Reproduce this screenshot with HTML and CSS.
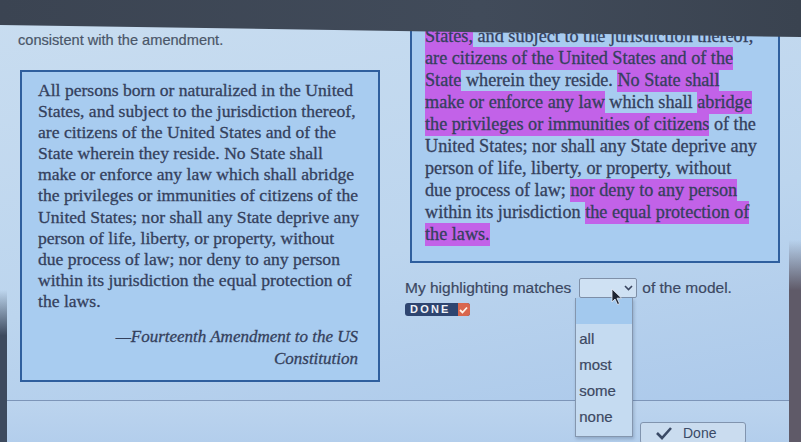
FILE: index.html
```html
<!DOCTYPE html>
<html lang="en">
<head>
<meta charset="utf-8">
<title>Fourteenth Amendment highlighting</title>
<link rel="stylesheet" href="styles.css">
</head>
<body>
<div class="topbar"></div>
<main class="page">
  <section class="col-left">
    <p class="intro">consistent with the amendment.</p>
    <blockquote class="quote">
      <p class="quote-text">All persons born or naturalized in the United<br>States, and subject to the jurisdiction thereof,<br>are citizens of the United States and of the<br>State wherein they reside. No State shall<br>make or enforce any law which shall abridge<br>the privileges or immunities of citizens of the<br>United States; nor shall any State deprive any<br>person of life, liberty, or property, without<br>due process of law; nor deny to any person<br>within its jurisdiction the equal protection of<br>the laws.</p>
      <p class="cite">—Fourteenth Amendment to the US<br>Constitution</p>
    </blockquote>
  </section>
  <section class="col-right">
    <div class="quote model">
      <p class="quote-text"><span class="hl">States,</span> and subject to the jurisdiction thereof,<br><span class="hl">are citizens of the United States and of the</span><br><span class="hl">State</span> wherein they reside. <span class="hl">No State shall</span><br><span class="hl">make or enforce any law</span> which shall <span class="hl">abridge</span><br><span class="hl">the privileges or immunities of citizens</span> of the<br>United States; nor shall any State deprive any<br>person of life, liberty, or property, without<br>due process of law; <span class="hl">nor deny to any person</span><br>within its jurisdiction <span class="hl">the equal protection of</span><br><span class="hl">the laws.</span></p>
    </div>
    <div class="answer">
      <span>My highlighting matches</span>
      <span class="select-wrap">
        <span class="select">
          <svg class="chev" width="9" height="6" viewBox="0 0 9 6"><path d="M1 1 L4.5 4.5 L8 1" fill="none" stroke="#3a4660" stroke-width="1.6"/></svg>
        </span>
        <svg class="cursor" width="12" height="18" viewBox="0 0 12 18"><path d="M1 1 L1 14 L4 11 L6.5 16.5 L8.5 15.6 L6 10.2 L10.5 10.2 Z" fill="#1e2533" stroke="#e8eef6" stroke-width="0.8"/></svg>
        <ul class="options">
          <li class="opt opt-blank"></li>
          <li class="opt">all</li>
          <li class="opt">most</li>
          <li class="opt">some</li>
          <li class="opt">none</li>
        </ul>
      </span>
      <span>of the model.</span>
    </div>
    <div class="done-badge"><span class="done-label">DONE</span><span class="done-check"><svg width="9" height="8" viewBox="0 0 9 8"><path d="M1 4 L3.5 6.5 L8 1.5" fill="none" stroke="#fff3e8" stroke-width="1.8"/></svg></span></div>
  </section>
</main>
<footer class="footer">
  <button class="done-btn"><svg width="18" height="14" viewBox="0 0 18 14"><path d="M2 7 L7 12 L16 2" fill="none" stroke="#3a4a66" stroke-width="2.6"/></svg><span>Done</span></button>
</footer>
<div class="bezel-left"></div>
<div class="bezel-right"></div>
</body>
</html>
```
FILE: styles.css
```css
html, body {
  margin: 0;
  padding: 0;
}
body {
  width: 801px;
  height: 442px;
  overflow: hidden;
  position: relative;
  background: linear-gradient(170deg, #c9ddf0 0%, #bcd5ee 55%, #a9c7ea 100%);
  font-family: "Liberation Sans", Arial, sans-serif;
  color: #3a4660;
}
.topbar {
  position: absolute;
  top: 0;
  left: 0;
  width: 801px;
  height: 38px;
  background: linear-gradient(90deg, #3b4452 0%, #414b5a 60%, #3a4350 100%);
  clip-path: polygon(0 0, 100% 0, 100% 37px, 0 25px);
  z-index: 5;
}
.page {
  display: grid;
  grid-template-columns: 367px 375px;
  column-gap: 20px;
  padding-left: 18px;
  height: 400px;
  box-sizing: border-box;
}
.intro {
  margin: 0;
  padding-top: 30px;
  font-size: 14.6px;
  line-height: 20px;
  color: #4a5668;
  -webkit-text-stroke: 0.2px #4a5668;
}
.quote {
  margin: 20px 0 0 2px;
  width: 360px;
  box-sizing: border-box;
  border: 2px solid #2f5f9e;
  background: #a8ccf0;
  padding: 8px 12px 10px 16px;
  font-family: "Liberation Serif", "Times New Roman", serif;
  color: #34405c;
  -webkit-text-stroke: 0.3px #34405c;
}
.quote-text {
  margin: 0;
  font-size: 17.6px;
  line-height: 21.1px;
  white-space: nowrap;
}
.cite {
  margin: 14px 8px 0 0;
  text-align: right;
  font-style: italic;
  font-size: 17px;
  line-height: 22px;
}
.model {
  margin: 0 0 0 5px;
  width: 370px;
  height: 263px;
  padding: 25px 6px 0 13px;
  border-top: none;
  overflow: hidden;
}
.model .quote-text {
  font-size: 18.2px;
  line-height: 22px;
}
.hl {
  background: #c262e8;
  padding: 1px 0 2px;
}
.answer {
  margin-top: 14px;
  display: flex;
  align-items: center;
  gap: 5px;
  font-size: 15.5px;
  line-height: 22px;
  color: #3c4862;
  -webkit-text-stroke: 0.2px #3c4862;
}
.select-wrap {
  position: relative;
  display: inline-block;
  margin-left: 3px;
}
.select {
  display: flex;
  justify-content: flex-end;
  align-items: center;
  width: 58px;
  height: 20px;
  box-sizing: border-box;
  border: 1px solid #7f90a8;
  border-radius: 2px;
  background: #cfe1f3;
  padding-right: 3px;
}
.cursor {
  position: absolute;
  left: 32px;
  top: 10px;
  z-index: 3;
}
.options {
  position: absolute;
  top: 20px;
  left: -4px;
  width: 56px;
  margin: 0;
  padding: 0 0 6px;
  list-style: none;
  background: #c5dbf1;
  border: 1px solid #8496ae;
  border-top: none;
  box-shadow: 1px 2px 3px rgba(40, 60, 90, 0.25);
  z-index: 2;
}
.opt {
  height: 26px;
  line-height: 26px;
  padding-left: 3px;
  font-size: 15px;
  color: #3c4862;
}
.opt-blank {
  height: 26px;
  background: #a3c9ee;
  margin-bottom: 2px;
}
.done-badge {
  margin-top: 3px;
  display: inline-flex;
  align-items: center;
  height: 13px;
  background: #2e4570;
  border-radius: 3px;
  overflow: hidden;
}
.done-label {
  padding: 0 7px 0 5px;
  font-size: 11px;
  font-weight: bold;
  letter-spacing: 2.2px;
  color: #eef2f8;
  line-height: 13px;
  -webkit-text-stroke: 0;
}
.done-check {
  display: flex;
  align-items: center;
  justify-content: center;
  width: 12px;
  height: 13px;
  background: #d9674e;
}
.footer {
  border-top: 1px solid #7d95b8;
  height: 42px;
  box-sizing: border-box;
  background: linear-gradient(180deg, #bcd4ee, #b3ceec);
  padding: 21px 0 0 640px;
}
.done-btn {
  display: flex;
  align-items: center;
  gap: 10px;
  width: 106px;
  height: 22px;
  padding: 0 0 0 14px;
  border: 1px solid #8194ae;
  border-radius: 3px;
  background: #cadcef;
  font-family: "Liberation Sans", Arial, sans-serif;
  font-size: 14px;
  line-height: 16px;
  color: #3a4a66;
}
.bezel-left {
  position: absolute;
  left: 0;
  top: 290px;
  width: 7px;
  height: 152px;
  background: linear-gradient(180deg, rgba(60,72,90,0), #3d4a5e 30%);
}
.bezel-right {
  position: absolute;
  right: 0;
  top: 240px;
  width: 12px;
  height: 202px;
  background: linear-gradient(180deg, rgba(95,90,104,0), #5f5a68 25%);
}
```
